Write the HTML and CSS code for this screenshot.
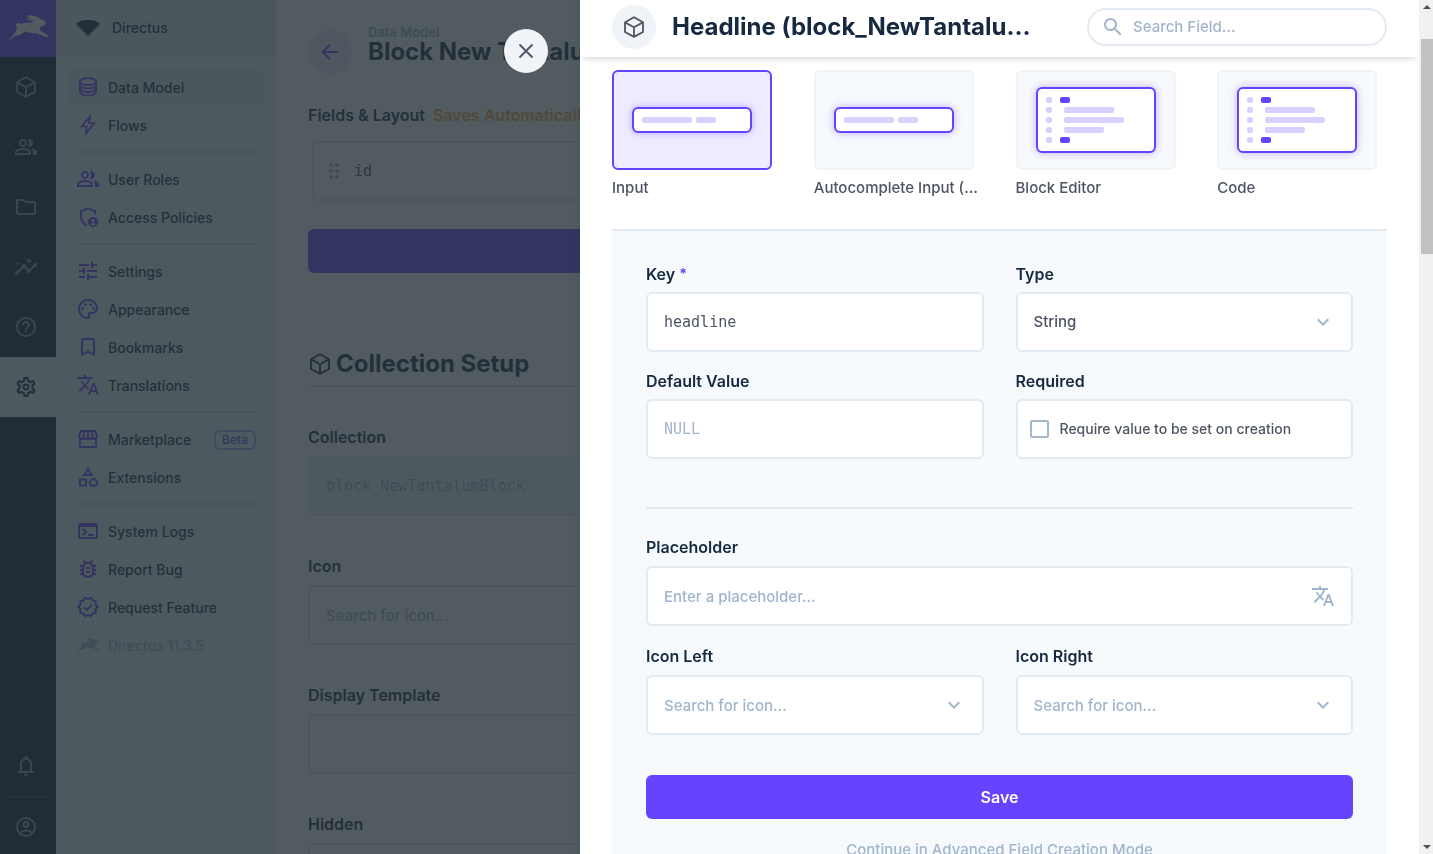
FILE: index.html
```html
<!DOCTYPE html>
<html lang="en">
<head>
<meta charset="utf-8">
<title>Block New Tantalum Block</title>
<link rel="stylesheet" href="styles.css">
</head>
<body>
<svg class="sprite" aria-hidden="true">
  <symbol id="i-rabbit" viewBox="15 40 124 80"><path d="M18 117C24 112 30 108 35 100C40 92 45 90 44 80C40 77 40 70 45 67C50 65 52 68 54 70C62 66 74 66 84 65C90 64 94 60 98 57C88 61 78 59 69 54C76 55 80 54 84 53C78 51 74 48 73 45C84 44 100 44 110 52C116 56 124 58 129 64C130 70 126 74 120 75C114 76 112 80 111 86C116 92 124 96 134 102C138 106 136 110 131 109C122 104 110 100 100 97C88 98 78 94 68 91C60 100 50 104 39 104C32 110 24 118 18 117Z"/></symbol>
  <symbol id="i-cube" viewBox="0 0 24 24"><path fill="none" stroke="currentColor" stroke-width="1.8" stroke-linejoin="round" d="M12 2.2 21 7.2v9.8l-9 4.9-9-4.9V7.2zM3 7.4l9 4.8 9-4.8M12 12.2v9.6"/></symbol>
  <symbol id="i-people" viewBox="0 0 24 24"><path d="M16.67 13.13C18.04 14.06 19 15.32 19 17v3h4v-3c0-2.18-3.57-3.47-6.33-3.87zM15 12c2.21 0 4-1.79 4-4s-1.79-4-4-4c-.47 0-.91.1-1.33.24C14.5 5.27 15 6.58 15 8s-.5 2.73-1.33 3.76c.42.14.86.24 1.33.24zM9 12c2.21 0 4-1.79 4-4s-1.79-4-4-4-4 1.79-4 4 1.79 4 4 4zm0-6c1.1 0 2 .9 2 2s-.9 2-2 2-2-.9-2-2 .9-2 2-2zM9 13c-2.67 0-8 1.34-8 4v3h16v-3c0-2.66-5.33-4-8-4zm6 5H3v-.99C3.2 16.29 6.3 15 9 15s5.8 1.29 6 2v1z"/></symbol>
  <symbol id="i-folder" viewBox="0 0 24 24"><path d="M9.17 6l2 2H20v10H4V6h5.17M10 4H4c-1.1 0-1.99.9-1.99 2L2 18c0 1.1.9 2 2 2h16c1.1 0 2-.9 2-2V8c0-1.1-.9-2-2-2h-8l-2-2z"/></symbol>
  <symbol id="i-insights" viewBox="0 0 24 24"><path d="M21 8c-1.45 0-2.26 1.44-1.93 2.51l-3.55 3.56c-.3-.09-.74-.09-1.04 0l-2.55-2.55C12.27 10.45 11.46 9 10 9c-1.45 0-2.27 1.44-1.93 2.52l-4.56 4.55C2.44 15.74 1 16.55 1 18c0 1.1.9 2 2 2 1.45 0 2.26-1.44 1.93-2.51l4.55-4.56c.3.09.74.09 1.04 0l2.55 2.55C12.73 16.55 13.54 18 15 18c1.45 0 2.27-1.44 1.93-2.52l3.56-3.55C21.56 12.26 23 11.45 23 10c0-1.1-.9-2-2-2zM15 9l.94-2.07L18 6l-2.06-.93L15 3l-.92 2.07L12 6l2.08.93zM3.5 11L4 9l2-.5L4 8l-.5-2L3 8l-2 .5L3 9z"/></symbol>
  <symbol id="i-help" viewBox="0 0 24 24"><path d="M11 18h2v-2h-2v2zm1-16C6.48 2 2 6.48 2 12s4.48 10 10 10 10-4.48 10-10S17.52 2 12 2zm0 18c-4.41 0-8-3.59-8-8s3.59-8 8-8 8 3.59 8 8-3.59 8-8 8zm0-14c-2.21 0-4 1.79-4 4h2c0-1.1.9-2 2-2s2 .9 2 2c0 2-3 1.75-3 5h2c0-2.25 3-2.5 3-5 0-2.21-1.79-4-4-4z"/></symbol>
  <symbol id="i-gear" viewBox="0 0 24 24"><path d="M19.43 12.98c.04-.32.07-.64.07-.98 0-.34-.03-.66-.07-.98l2.11-1.65c.19-.15.24-.42.12-.64l-2-3.46c-.09-.16-.26-.25-.44-.25-.06 0-.12.01-.17.03l-2.49 1c-.52-.4-1.08-.73-1.69-.98l-.38-2.65C14.46 2.18 14.25 2 14 2h-4c-.25 0-.46.18-.49.42l-.38 2.65c-.61.25-1.17.59-1.69.98l-2.49-1c-.06-.02-.12-.03-.18-.03-.17 0-.34.09-.43.25l-2 3.46c-.13.22-.07.49.12.64l2.11 1.65c-.04.32-.07.65-.07.98 0 .33.03.66.07.98l-2.11 1.65c-.19.15-.24.42-.12.64l2 3.46c.09.16.26.25.44.25.06 0 .12-.01.17-.03l2.49-1c.52.4 1.08.73 1.69.98l.38 2.65c.03.24.24.42.49.42h4c.25 0 .46-.18.49-.42l.38-2.65c.61-.25 1.17-.59 1.69-.98l2.49 1c.06.02.12.03.18.03.17 0 .34-.09.43-.25l2-3.46c.12-.22.07-.49-.12-.64l-2.11-1.65zm-1.98-1.71c.04.31.05.52.05.73 0 .21-.02.43-.05.73l-.14 1.13.89.7 1.08.84-.7 1.21-1.27-.51-1.04-.42-.9.68c-.43.32-.84.56-1.25.73l-1.06.43-.16 1.13-.2 1.35h-1.4l-.19-1.35-.16-1.13-1.06-.43c-.43-.18-.83-.41-1.23-.71l-.91-.7-1.06.43-1.27.51-.7-1.21 1.08-.84.89-.7-.14-1.13c-.03-.31-.05-.54-.05-.74s.02-.43.05-.73l.14-1.13-.89-.7-1.08-.84.7-1.21 1.27.51 1.04.42.9-.68c.43-.32.84-.56 1.25-.73l1.06-.43.16-1.13.2-1.35h1.39l.19 1.35.16 1.13 1.06.43c.43.18.83.41 1.23.71l.91.7 1.06-.43 1.27-.51.7 1.21-1.07.85-.89.7.14 1.13zM12 8.6a3.4 3.4 0 1 0 0 6.8 3.4 3.4 0 0 0 0-6.8zm0 5a1.6 1.6 0 1 1 0-3.2 1.6 1.6 0 0 1 0 3.2z"/></symbol>
  <symbol id="i-bell" viewBox="0 0 24 24"><path d="M4 19v-2h2v-7q0-2.075 1.25-3.687T10.5 4.2v-.7q0-.625.438-1.062T12 2t1.063.438T13.5 3.5v.7q2 .5 3.25 2.113T18 10v7h2v2zm8 3q-.825 0-1.412-.587T10 20h4q0 .825-.587 1.413T12 22m-4-5h8v-7q0-1.65-1.175-2.825T12 6T9.175 7.175T8 10z"/></symbol>
  <symbol id="i-account" viewBox="0 0 24 24"><g fill="none" stroke="currentColor" stroke-width="2"><circle cx="12" cy="12" r="9"/><circle cx="12" cy="9.5" r="2.5"/><path d="M5.6 18c3.6-3.2 9.2-3.2 12.8 0"/></g></symbol>
  <symbol id="i-database" viewBox="0 0 24 24"><g fill="none" stroke="currentColor" stroke-width="1.9"><ellipse cx="12" cy="6.6" rx="8" ry="3.4"/><path d="M4 6.6v10.6c0 1.9 3.6 3.4 8 3.4s8-1.5 8-3.4V6.6M4 10.2c0 1.9 3.6 3.4 8 3.4s8-1.5 8-3.4M4 13.8c0 1.9 3.6 3.4 8 3.4s8-1.5 8-3.4"/></g></symbol>
  <symbol id="i-bolt" viewBox="0 0 24 24"><path fill="none" stroke="currentColor" stroke-width="1.9" stroke-linejoin="miter" d="M13.8 3.5 5.8 13.4h4.7L10 20.5l8.200-10.400h-5.100z"/></symbol>
  <symbol id="i-shield" viewBox="0 0 24 24"><path fill="none" stroke="currentColor" stroke-width="2" d="M19 9.500V6l-7-2.700L5 6v5.200c0 4 2.300 7.600 6 9.300"/><path fill-rule="evenodd" d="M17 12a5 5 0 1 0 0 10 5 5 0 0 0 0-10zm0 2a1.600 1.600 0 1 1 0 3.200 1.600 1.600 0 0 1 0-3.200zm0 6.200c-1.200 0-2.200-.5-2.800-1.300.8-.9 4.800-.9 5.600 0-.6.8-1.600 1.300-2.800 1.300z"/></symbol>
  <symbol id="i-tune" viewBox="0 0 24 24"><path d="M3 17v2h6v-2H3zM3 5v2h10V5H3zm10 16v-2h8v-2h-8v-2h-2v6h2zM7 9v2H3v2h4v2h2V9H7zm14 4v-2H11v2h10zm-6-4h2V7h4V5h-4V3h-2v6z"/></symbol>
  <symbol id="i-palette" viewBox="0 0 24 24"><path d="M12 22C6.490 22 2 17.510 2 12S6.490 2 12 2s10 4.040 10 9c0 3.310-2.690 6-6 6h-1.770c-.28 0-.5.22-.5.5 0 .12.05.23.13.33.41.47.64 1.060.64 1.670 0 1.380-1.120 2.500-2.500 2.500zm0-18c-4.410 0-8 3.590-8 8s3.590 8 8 8c.28 0 .5-.22.5-.5 0-.16-.08-.28-.14-.35-.41-.46-.63-1.050-.63-1.650 0-1.380 1.120-2.500 2.500-2.500H16c2.210 0 4-1.790 4-4 0-3.860-3.590-7-8-7z"/><circle cx="6.500" cy="11.500" r="1.500"/><circle cx="9.500" cy="7.500" r="1.500"/><circle cx="14.500" cy="7.500" r="1.500"/><circle cx="17.500" cy="11.500" r="1.500"/></symbol>
  <symbol id="i-bookmark" viewBox="0 0 24 24"><path d="M17 3H7c-1.100 0-2 .9-2 2v16l7-3 7 3V5c0-1.100-.9-2-2-2zm0 15l-5-2.180L7 18V5h10v13z"/></symbol>
  <symbol id="i-translate" viewBox="0 0 24 24"><path d="M12.870 15.070l-2.540-2.510.03-.03c1.740-1.940 2.980-4.170 3.710-6.530H17V4h-7V2H8v2H1v1.990h11.170C11.500 7.920 10.440 9.750 9 11.350 8.070 10.320 7.300 9.190 6.690 8h-2c.73 1.630 1.730 3.170 2.980 4.560l-5.090 5.020L4 19l5-5 3.110 3.110.76-2.040zM18.500 10h-2L12 22h2l1.120-3h4.750L21 22h2l-4.500-12zm-2.620 7l1.620-4.330L19.120 17h-3.240z"/></symbol>
  <symbol id="i-store" viewBox="0 0 24 24"><path fill="none" stroke="currentColor" stroke-width="1.900" stroke-linejoin="round" d="M4 11.500V20h16v-8.500M4.800 4h14.400l1.700 5.700c0 1.300-.9 2.300-2.200 2.300s-2.300-1-2.300-2.300c0 1.300-.9 2.300-2.200 2.300S12 11 12 9.700c0 1.300-1 2.300-2.200 2.300s-2.200-1-2.200-2.300c0 1.300-1 2.300-2.300 2.300s-2.200-1-2.200-2.300zM8.300 4l-.7 5.700M12 4v5.700M15.700 4l.7 5.700"/></symbol>
  <symbol id="i-category" viewBox="0 0 24 24"><path d="M12 2l-5.500 9h11L12 2zm0 3.840L13.930 9h-3.870L12 5.840zM17.500 13c-2.490 0-4.500 2.010-4.500 4.500s2.010 4.500 4.500 4.500 4.500-2.010 4.500-4.500-2.010-4.500-4.500-4.500zm0 7c-1.380 0-2.500-1.120-2.500-2.500s1.120-2.500 2.500-2.500 2.500 1.120 2.500 2.500-1.120 2.500-2.500 2.500zM3 21.500h8v-8H3v8zm2-6h4v4H5v-4z"/></symbol>
  <symbol id="i-terminal" viewBox="0 0 24 24"><path d="M4 4h16a2 2 0 0 1 2 2v12a2 2 0 0 1-2 2H4a2 2 0 0 1-2-2V6a2 2 0 0 1 2-2zm0 4v10h16V8z"/><path fill="none" stroke="currentColor" stroke-width="2" d="M6.700 9.700 10 13l-3.300 3.300M12 16h6"/></symbol>
  <symbol id="i-bug" viewBox="0 0 24 24"><path d="M20 8h-2.810c-.45-.78-1.070-1.450-1.820-1.960L17 4.410 15.590 3l-2.170 2.170C12.960 5.060 12.490 5 12 5s-.96.06-1.410.17L8.410 3 7 4.410l1.620 1.630C7.880 6.550 7.260 7.220 6.810 8H4v2h2.090c-.05.33-.09.66-.09 1v1H4v2h2v1c0 .34.04.67.09 1H4v2h2.810c1.040 1.790 2.970 3 5.190 3s4.150-1.210 5.190-3H20v-2h-2.090c.05-.33.09-.66.09-1v-1h2v-2h-2v-1c0-.34-.04-.67-.09-1H20V8zm-4 4v3c0 2.200-1.800 4-4 4s-4-1.800-4-4v-4c0-2.200 1.800-4 4-4s4 1.800 4 4v1zM10 14h4v2h-4zM10 10h4v2h-4z"/></symbol>
  <symbol id="i-verified" viewBox="0 0 24 24"><path d="M23 12l-2.440-2.780.34-3.680-3.610-.82-1.890-3.180L12 3 8.600 1.540 6.710 4.720l-3.610.81.34 3.680L1 12l2.440 2.780-.34 3.690 3.610.82 1.890 3.180L12 21l3.400 1.460 1.890-3.180 3.610-.82-.34-3.680L23 12zm-4.510 2.110.26 2.790-2.740.62-1.430 2.410L12 18.820l-2.580 1.110-1.430-2.410-2.740-.62.26-2.800L3.660 12l1.850-2.120-.26-2.780 2.740-.61 1.430-2.410L12 5.180l2.580-1.110 1.430 2.410 2.740.62-.26 2.790L20.340 12l-1.850 2.110z"/><path fill="none" stroke="currentColor" stroke-width="1.800" d="m8 12.200 2.800 2.800 5.400-5.400"/></symbol>
  <symbol id="i-back" viewBox="0 0 24 24"><path fill="none" stroke="currentColor" stroke-width="2" d="M20 12H5M12 4.700 4.700 12l7.300 7.300"/></symbol>
  <symbol id="i-close" viewBox="0 0 24 24"><path fill="none" stroke="currentColor" stroke-width="1.800" d="m5.500 5.500 13 13M18.500 5.500l-13 13"/></symbol>
  <symbol id="i-drag" viewBox="0 0 24 24"><g><circle cx="9" cy="6" r="2"/><circle cx="15" cy="6" r="2"/><circle cx="9" cy="12" r="2"/><circle cx="15" cy="12" r="2"/><circle cx="9" cy="18" r="2"/><circle cx="15" cy="18" r="2"/></g></symbol>
  <symbol id="i-search" viewBox="0 0 24 24"><path d="M15.500 14h-.79l-.28-.27C15.410 12.590 16 11.110 16 9.500 16 5.910 13.090 3 9.500 3S3 5.910 3 9.500 5.910 16 9.500 16c1.610 0 3.090-.59 4.230-1.570l.27.28v.79l5 4.990L20.490 19l-4.990-5zm-6 0C7.010 14 5 11.990 5 9.500S7.010 5 9.500 5 14 7.010 14 9.500 11.990 14 9.500 14z"/></symbol>
  <symbol id="i-chevron" viewBox="0 0 24 24"><path fill="none" stroke="currentColor" stroke-width="2" d="m6.700 9.300 5.300 5.300 5.300-5.300"/></symbol>
  <symbol id="i-fan" viewBox="0 0 24 24"><path d="M0 8c6-5.600 18-5.600 24 0L12 20z"/></symbol>
  <symbol id="p-input" viewBox="0 0 156 96"><rect class="p-frame" x="19" y="36" width="118" height="24" rx="5"/><g class="p-soft"><rect x="28" y="45" width="50" height="6" rx="2"/><rect x="82" y="45" width="20" height="6" rx="2"/></g></symbol>
  <symbol id="p-code" viewBox="0 0 156 96"><rect class="p-frame" x="19" y="16" width="118" height="64" rx="5"/><g class="p-soft"><rect x="28" y="25" width="6" height="6" rx="2"/><rect x="28" y="35" width="6" height="6" rx="2"/><rect x="28" y="45" width="6" height="6" rx="2"/><rect x="28" y="55" width="6" height="6" rx="2"/><rect x="28" y="65" width="6" height="6" rx="2"/><rect x="46" y="35" width="50" height="6" rx="2"/><rect x="46" y="45" width="60" height="6" rx="2"/><rect x="46" y="55" width="40" height="6" rx="2"/></g><g class="p-strong"><rect x="42" y="25" width="10" height="6" rx="2"/><rect x="42" y="65" width="10" height="6" rx="2"/></g></symbol>
</svg>

<div class="app">
  <nav class="modules" aria-label="Modules">
    <a class="logo" href="#"><svg><use href="#i-rabbit"/></svg></a>
    <a class="module" href="#"><svg class="icon"><use href="#i-cube"/></svg></a>
    <a class="module" href="#"><svg class="icon"><use href="#i-people"/></svg></a>
    <a class="module" href="#"><svg class="icon"><use href="#i-folder"/></svg></a>
    <a class="module" href="#"><svg class="icon"><use href="#i-insights"/></svg></a>
    <a class="module" href="#"><svg class="icon"><use href="#i-help"/></svg></a>
    <a class="module active" href="#"><svg class="icon"><use href="#i-gear"/></svg></a>
    <span class="spacer"></span>
    <button class="module" type="button" aria-label="Notifications"><svg class="icon"><use href="#i-bell"/></svg></button>
    <a class="module account" href="#"><svg class="icon"><use href="#i-account"/></svg></a>
  </nav>

  <aside class="sidebar">
    <header class="project"><svg class="icon"><use href="#i-fan"/></svg><span>Directus</span></header>
    <ul class="nav">
      <li><a class="current" href="#"><svg class="icon"><use href="#i-database"/></svg>Data Model</a></li>
      <li><a href="#"><svg class="icon"><use href="#i-bolt"/></svg>Flows</a></li>
      <li class="rule"></li>
      <li><a href="#"><svg class="icon"><use href="#i-people"/></svg>User Roles</a></li>
      <li><a href="#"><svg class="icon"><use href="#i-shield"/></svg>Access Policies</a></li>
      <li class="rule"></li>
      <li><a href="#"><svg class="icon"><use href="#i-tune"/></svg>Settings</a></li>
      <li><a href="#"><svg class="icon"><use href="#i-palette"/></svg>Appearance</a></li>
      <li><a href="#"><svg class="icon"><use href="#i-bookmark"/></svg>Bookmarks</a></li>
      <li><a href="#"><svg class="icon"><use href="#i-translate"/></svg>Translations</a></li>
      <li class="rule"></li>
      <li><a href="#"><svg class="icon"><use href="#i-store"/></svg>Marketplace<span class="badge">Beta</span></a></li>
      <li><a href="#"><svg class="icon"><use href="#i-category"/></svg>Extensions</a></li>
      <li class="rule"></li>
      <li><a href="#"><svg class="icon"><use href="#i-terminal"/></svg>System Logs</a></li>
      <li><a href="#"><svg class="icon"><use href="#i-bug"/></svg>Report Bug</a></li>
      <li><a href="#"><svg class="icon"><use href="#i-verified"/></svg>Request Feature</a></li>
      <li><a class="version" href="#"><svg class="icon"><use href="#i-rabbit"/></svg>Directus 11.3.5</a></li>
    </ul>
  </aside>

  <main class="page">
    <header class="page-head">
      <button class="round back" type="button" aria-label="Back"><svg class="icon"><use href="#i-back"/></svg></button>
      <div class="page-title"><a href="#">Data Model</a><h1>Block New Tantalum Block</h1></div>
    </header>
    <div class="layout-label">Fields &amp; Layout <span>Saves Automatically</span></div>
    <div class="field-row"><svg class="icon"><use href="#i-drag"/></svg><code>id</code></div>
    <button class="create" type="button">Create Field</button>
    <h2><svg class="icon"><use href="#i-cube"/></svg>Collection Setup</h2>
    <div class="setup">
      <div class="field"><label for="collection">Collection</label><input id="collection" class="box mono" value="block_NewTantalumBlock" disabled></div>
      <div class="field"><label for="icon">Icon</label><input id="icon" class="box" placeholder="Search for icon..."></div>
      <div class="field"><label for="template">Display Template</label><input id="template" class="box"></div>
      <div class="field"><label for="hidden">Hidden</label><input id="hidden" class="box"></div>
    </div>
  </main>
</div>

<div class="overlay">
  <section class="drawer" role="dialog" aria-labelledby="drawer-title">
    <button class="round close" type="button" aria-label="Close"><svg><use href="#i-close"/></svg></button>
    <div class="drawer-main">
      <header class="drawer-head">
        <span class="round"><svg class="icon"><use href="#i-cube"/></svg></span>
        <h1 id="drawer-title">Headline (block_NewTantalumBlock)</h1>
        <label class="search"><svg class="icon"><use href="#i-search"/></svg><input type="search" placeholder="Search Field..." aria-label="Search Field"></label>
      </header>
      <div class="drawer-body">
        <div class="interfaces">
          <button class="interface selected" type="button"><span class="preview"><svg><use href="#p-input"/></svg></span><span class="name">Input</span></button>
          <button class="interface" type="button"><span class="preview"><svg><use href="#p-input"/></svg></span><span class="name">Autocomplete Input (API)</span></button>
          <button class="interface" type="button"><span class="preview"><svg><use href="#p-code"/></svg></span><span class="name">Block Editor</span></button>
          <button class="interface" type="button"><span class="preview"><svg><use href="#p-code"/></svg></span><span class="name">Code</span></button>
        </div>
        <form class="config">
          <div class="grid">
            <div class="field"><label for="key">Key <sup>*</sup></label><input id="key" class="box mono" value="headline"></div>
            <div class="field"><label for="type">Type</label><div class="control"><select id="type" class="box"><option>String</option></select><svg class="icon"><use href="#i-chevron"/></svg></div></div>
            <div class="field"><label for="default">Default Value</label><input id="default" class="box mono" placeholder="NULL"></div>
            <div class="field"><label for="required">Required</label><label class="box check"><input id="required" type="checkbox"><span>Require value to be set on creation</span></label></div>
          </div>
          <hr>
          <div class="grid extra">
            <div class="field wide"><label for="placeholder">Placeholder</label><div class="control"><input id="placeholder" class="box" placeholder="Enter a placeholder..."><svg class="icon"><use href="#i-translate"/></svg></div></div>
            <div class="field"><label for="left">Icon Left</label><div class="control"><input id="left" class="box" placeholder="Search for icon..."><svg class="icon"><use href="#i-chevron"/></svg></div></div>
            <div class="field"><label for="right">Icon Right</label><div class="control"><input id="right" class="box" placeholder="Search for icon..."><svg class="icon"><use href="#i-chevron"/></svg></div></div>
          </div>
          <button class="save" type="button">Save</button>
          <button class="advanced" type="button">Continue in Advanced Field Creation Mode</button>
        </form>
      </div>
    </div>
    <div class="scrollbar" aria-hidden="true"><i class="arrow up"></i><i class="track"><i class="thumb"></i></i><i class="arrow down"></i></div>
  </section>
</div>
</body>
</html>
```
FILE: styles.css
```css
:root {
  --primary: #6644ff;
  --heading: #172940;
  --text: #4f5464;
  --subdued: #a2b5cd;
  --border: #e4eaf1;
  --soft: #f0f4f9;
  --panel: #f7fafc;
}

* { box-sizing: border-box; }

body {
  margin: 0;
  height: 100vh;
  overflow: hidden;
  background: #fff;
  color: var(--text);
  font: 500 15px/20px Inter, "Liberation Sans", sans-serif;
}

button, input, select { font: inherit; color: inherit; }
button { border: 0; padding: 0; background: none; cursor: pointer; }
a { color: inherit; text-decoration: none; }
h1, h2 { margin: 0; color: var(--heading); font-size: 24px; line-height: 32px; font-weight: 700; white-space: nowrap; }
svg { display: block; fill: currentColor; }
.sprite { position: absolute; width: 0; height: 0; }
.icon { width: 24px; height: 24px; flex: none; }

.app { display: flex; height: 100vh; overflow: hidden; }

/* Module bar */
.modules { display: flex; flex-direction: column; flex: none; width: 56px; background: #0e1c2f; color: #8196b1; }
.logo { display: flex; align-items: center; justify-content: center; height: 57px; background: var(--primary); color: #fff; padding-bottom: 3px; }
.logo svg { width: 42px; height: 27px; }
.module { display: flex; align-items: center; justify-content: center; width: 56px; height: 60px; padding-right: 4px; }
.module.active { background: var(--soft); color: var(--heading); }
.spacer { flex: 1; }
.account { flex-direction: column; justify-content: flex-start; gap: 17px; height: 58px; }
.account::before { content: ""; width: 44px; height: 2px; margin-left: 4px; background: #26364b; }

/* Navigation */
.sidebar { flex: none; width: 220px; background: var(--soft); font-size: 14px; }
.project { display: flex; align-items: center; gap: 12px; height: 57px; padding: 0 20px 2px; background: var(--border); color: var(--heading); }
.nav { display: flex; flex-direction: column; gap: 2px; margin: 0; padding: 12px; list-style: none; }
.nav a { display: flex; align-items: center; gap: 8px; height: 36px; padding: 2px 8px 0; border-radius: 6px; color: var(--heading); }
.nav .icon { color: var(--primary); margin-bottom: 2px; }
.nav .current { background: var(--border); }
.nav .version, .nav .version .icon { color: var(--subdued); }
.rule { height: 14px; padding: 6px 8px; }
.rule::before { content: ""; display: block; height: 2px; background: #d3dae4; }
.badge { margin-left: auto; padding: 0 6px; border: 2px solid #b3a2ff; border-radius: 6px; color: var(--primary); font-size: 12px; line-height: 16px; }

/* Page */
.page { flex: 1; min-width: 0; padding: 22px 32px 0; overflow: hidden; }
.page-head { display: flex; align-items: center; gap: 16px; height: 60px; }
.round { display: flex; align-items: center; justify-content: center; flex: none; width: 44px; height: 44px; border-radius: 50%; background: var(--soft); color: var(--text); }
.back { background: #f0ecff; color: var(--primary); }
.page-title a { display: block; color: var(--subdued); font-size: 13px; line-height: 12px; font-weight: 600; }
.page-title { padding-bottom: 12px; }
.page-title h1 { line-height: 28px; }
.layout-label { margin-top: 23px; color: var(--heading); font-size: 16px; font-weight: 600; white-space: nowrap; }
.layout-label span { margin-left: 4px; color: #ffa439; }
.field-row { display: flex; align-items: center; gap: 8px; height: 60px; margin: 16px 0 28px 4px; padding: 0 8px; border: 2px solid var(--border); border-radius: 6px; }
.field-row .icon { color: var(--subdued); }
code, .mono { font-family: "DejaVu Sans Mono", monospace; font-size: 15px; }
.create { display: block; width: 100%; height: 44px; border-radius: 6px; background: var(--primary); color: #fff; font-size: 16px; font-weight: 600; }
.page h2 { display: flex; align-items: center; gap: 4px; margin: 75px 0 40px; padding-bottom: 5px; border-bottom: 2px solid var(--border); }
.setup { display: flex; flex-direction: column; gap: 40px; }
.setup .field > label:first-child { margin-bottom: 9px; }

/* Fields */
.field { min-width: 0; }
.field > label:first-child { display: block; margin-bottom: 8px; color: var(--heading); font-size: 16px; line-height: 20px; font-weight: 600; }
.field sup { color: var(--primary); line-height: 0; font-size: 14px; font-weight: 700; vertical-align: 1px; }
.box { display: block; width: 100%; height: 60px; padding: 0 16px; border: 2px solid var(--border); border-radius: 6px; background: #fff; outline: 0; appearance: none; }
.box:disabled { background: var(--soft); color: var(--subdued); }
::placeholder { color: var(--subdued); opacity: 1; }
.control { display: grid; align-items: center; }
.control > * { grid-area: 1 / 1; }
.control .icon { justify-self: end; margin-right: 18px; color: var(--subdued); pointer-events: none; }
.check { display: flex; align-items: center; gap: 11px; padding: 0 12px; font-size: 14px; }
.check input { appearance: none; width: 19px; height: 18px; margin: 0; border: 2px solid var(--subdued); border-radius: 2px; }

/* Drawer */
.overlay { position: fixed; inset: 0; display: flex; justify-content: flex-end; background: rgba(38, 50, 56, .8); }
.drawer { position: relative; display: flex; flex: none; width: 853px; max-width: 100%; height: 100%; background: #fff; box-shadow: 0 0 12px rgba(38, 50, 56, .1); }
.close { position: absolute; top: 29px; left: -76px; }
.close svg { width: 24px; height: 24px; }
.drawer-main { flex: 1; min-width: 0; overflow: hidden; }
.drawer-head { position: relative; display: flex; align-items: center; gap: 16px; height: 57px; padding: 0 32px 3px; background: #fff; box-shadow: 0 4px 7px -4px rgba(0, 0, 0, .25); }
.drawer-head h1 { flex: 1; min-width: 0; margin-right: 28px; overflow: hidden; text-overflow: ellipsis; }
.search { display: flex; align-items: center; gap: 8px; width: 300px; height: 38px; padding: 0 12px; border: 2px solid var(--border); border-radius: 19px; color: var(--subdued); }
.search input { flex: 1; min-width: 0; border: 0; padding: 0; outline: 0; background: none; appearance: none; }
.drawer-body { padding: 13px 32px; }
.interfaces { display: grid; grid-template-columns: repeat(4, minmax(0, 1fr)); gap: 32px; }
.interface { min-width: 0; text-align: left; }
.preview { display: block; width: 160px; height: 100px; border: 2px solid var(--soft); border-radius: 6px; background: var(--panel); }
.preview svg { width: 156px; height: 96px; }
.selected .preview { border-color: var(--primary); background: #f0ecff; }
.name { display: block; margin-top: 8px; overflow: hidden; text-overflow: ellipsis; white-space: nowrap; }
.p-frame { fill: #fff; stroke: var(--primary); stroke-width: 2; filter: drop-shadow(0 0 4px rgba(102, 68, 255, .4)); }
.p-soft { fill: #d9d0ff; }
.p-strong { fill: var(--primary); }
.config { margin-top: 31px; padding: 33px 34px; border-top: 2px solid var(--border); background: var(--panel); }
.grid { display: grid; grid-template-columns: repeat(2, minmax(0, 1fr)); gap: 19px 32px; }
.extra { row-gap: 20px; }
.extra .field > label:first-child { margin-bottom: 9px; }
.wide { grid-column: 1 / -1; }
hr { height: 2px; margin: 48px 0 28px; border: 0; background: var(--border); }
.save { display: block; width: 100%; height: 44px; margin-top: 40px; border-radius: 6px; background: var(--primary); color: #fff; font-size: 16px; font-weight: 600; }
.advanced { display: block; margin: 21px auto 0; color: var(--subdued); }

/* Scrollbar */
.scrollbar { display: flex; flex-direction: column; align-items: center; width: 14px; background: #f1f1f1; }
.arrow { width: 0; height: 0; margin: 5px 0 5px 2px; border: 4px solid transparent; }
.up { border-top: 0; border-bottom-color: #505050; }
.down { border-bottom: 0; border-top-color: #505050; }
.track { display: flex; flex: 1; align-self: stretch; padding: 25px 0 0 2px; }
.thumb { width: 100%; height: 215px; background: #c1c1c1; }
```
